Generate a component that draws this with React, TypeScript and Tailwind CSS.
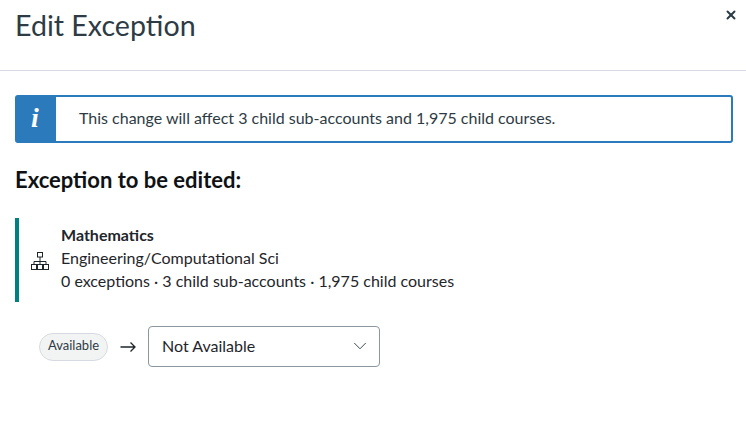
import React from 'react';
import { ChevronDown, X } from 'lucide-react';

function SubAccountIcon() {
  return (
    <svg className="mt-[2px]" width="18" height="18" viewBox="0 0 18 18" fill="none" stroke="#1f262b" strokeWidth="1">
      <rect x="6.5" y="0.5" width="5" height="4.5" />
      <path d="M9 5V9.5M3 12.5V9.5H15V12.5M9 9.5V12.5" />
      <rect x="0.5" y="12.5" width="5" height="5" />
      <rect x="6.5" y="12.5" width="5" height="5" />
      <rect x="12.5" y="12.5" width="5" height="5" />
    </svg>
  );
}

function ArrowIcon() {
  return (
    <svg className="ml-[12px] mr-[12px]" width="16" height="12" viewBox="0 0 16 12" fill="none" stroke="#1f262b" strokeWidth="1.3">
      <path d="M0.5 6H15M10.5 1.5L15 6L10.5 10.5" />
    </svg>
  );
}

export default function App() {
  return (
    <div className="w-[746px] h-[448px] bg-white text-[#2d3b45] overflow-hidden font-['Lato',sans-serif]">
      {/* Header */}
      <div className="flex justify-between h-[71px] border-b border-[#d7dae0] pl-[15px] pr-[8px]">
        <h1 className="text-[28.6px] leading-[34px] pt-[8px] font-normal">Edit Exception</h1>
        <button className="h-[24px] pt-[5px]">
          <X className="w-[14px] h-[14px]" strokeWidth={3.4} />
        </button>
      </div>

      <div className="pl-[15px] pr-[13px] pt-[24px]">
        {/* Alert */}
        <div className="flex h-[48px] rounded-[3px] border-2 border-[#2b7abc]">
          <div className="w-[40px] -ml-px bg-[#2b7abc] flex items-center justify-center">
            <span className="text-white text-[28px] font-bold italic font-['Liberation_Serif',serif] leading-none -ml-[2px] -mt-[2px]">i</span>
          </div>
          <p className="pl-[23px] pb-[2px] flex items-center text-[16px] text-[#2d3b45]">
            This change will affect 3 child sub-accounts and 1,975 child courses.
          </p>
        </div>

        <h2 className="mt-[22px] text-[22px] leading-[30px] font-bold text-[#0f1214]">Exception to be edited:</h2>

        {/* Account row */}
        <div className="mt-[23px] flex items-center h-[84px] border-l-[4px] border-[#008080] pl-[12px]">
          <SubAccountIcon />
          <div className="ml-[12px] pb-[5px] text-[16px] leading-[23px] text-[#1f262b]">
            <div className="font-bold">Mathematics</div>
            <div>Engineering/Computational Sci</div>
            <div>0 exceptions · 3 child sub-accounts · 1,975 child courses</div>
          </div>
        </div>

        {/* Status change */}
        <div className="mt-[24px] ml-[24px] flex items-center">
          <span className="h-[28px] w-[69px] pb-[2px] flex items-center justify-center rounded-full border border-[#d7dae0] bg-[#f2f4f4] text-[13px] text-[#2d3b45]">
            Available
          </span>
          <ArrowIcon />
          <div className="w-[232px] h-[41px] flex items-center justify-between rounded-[4px] border border-[#8b969e] pl-[13px] pr-[8px] pb-[2px] text-[16px] text-[#1f262b]">
            <span>Not Available</span>
            <ChevronDown className="w-[22px] h-[22px] text-[#2d3b45]" strokeWidth={1} />
          </div>
        </div>
      </div>
    </div>
  );
}
